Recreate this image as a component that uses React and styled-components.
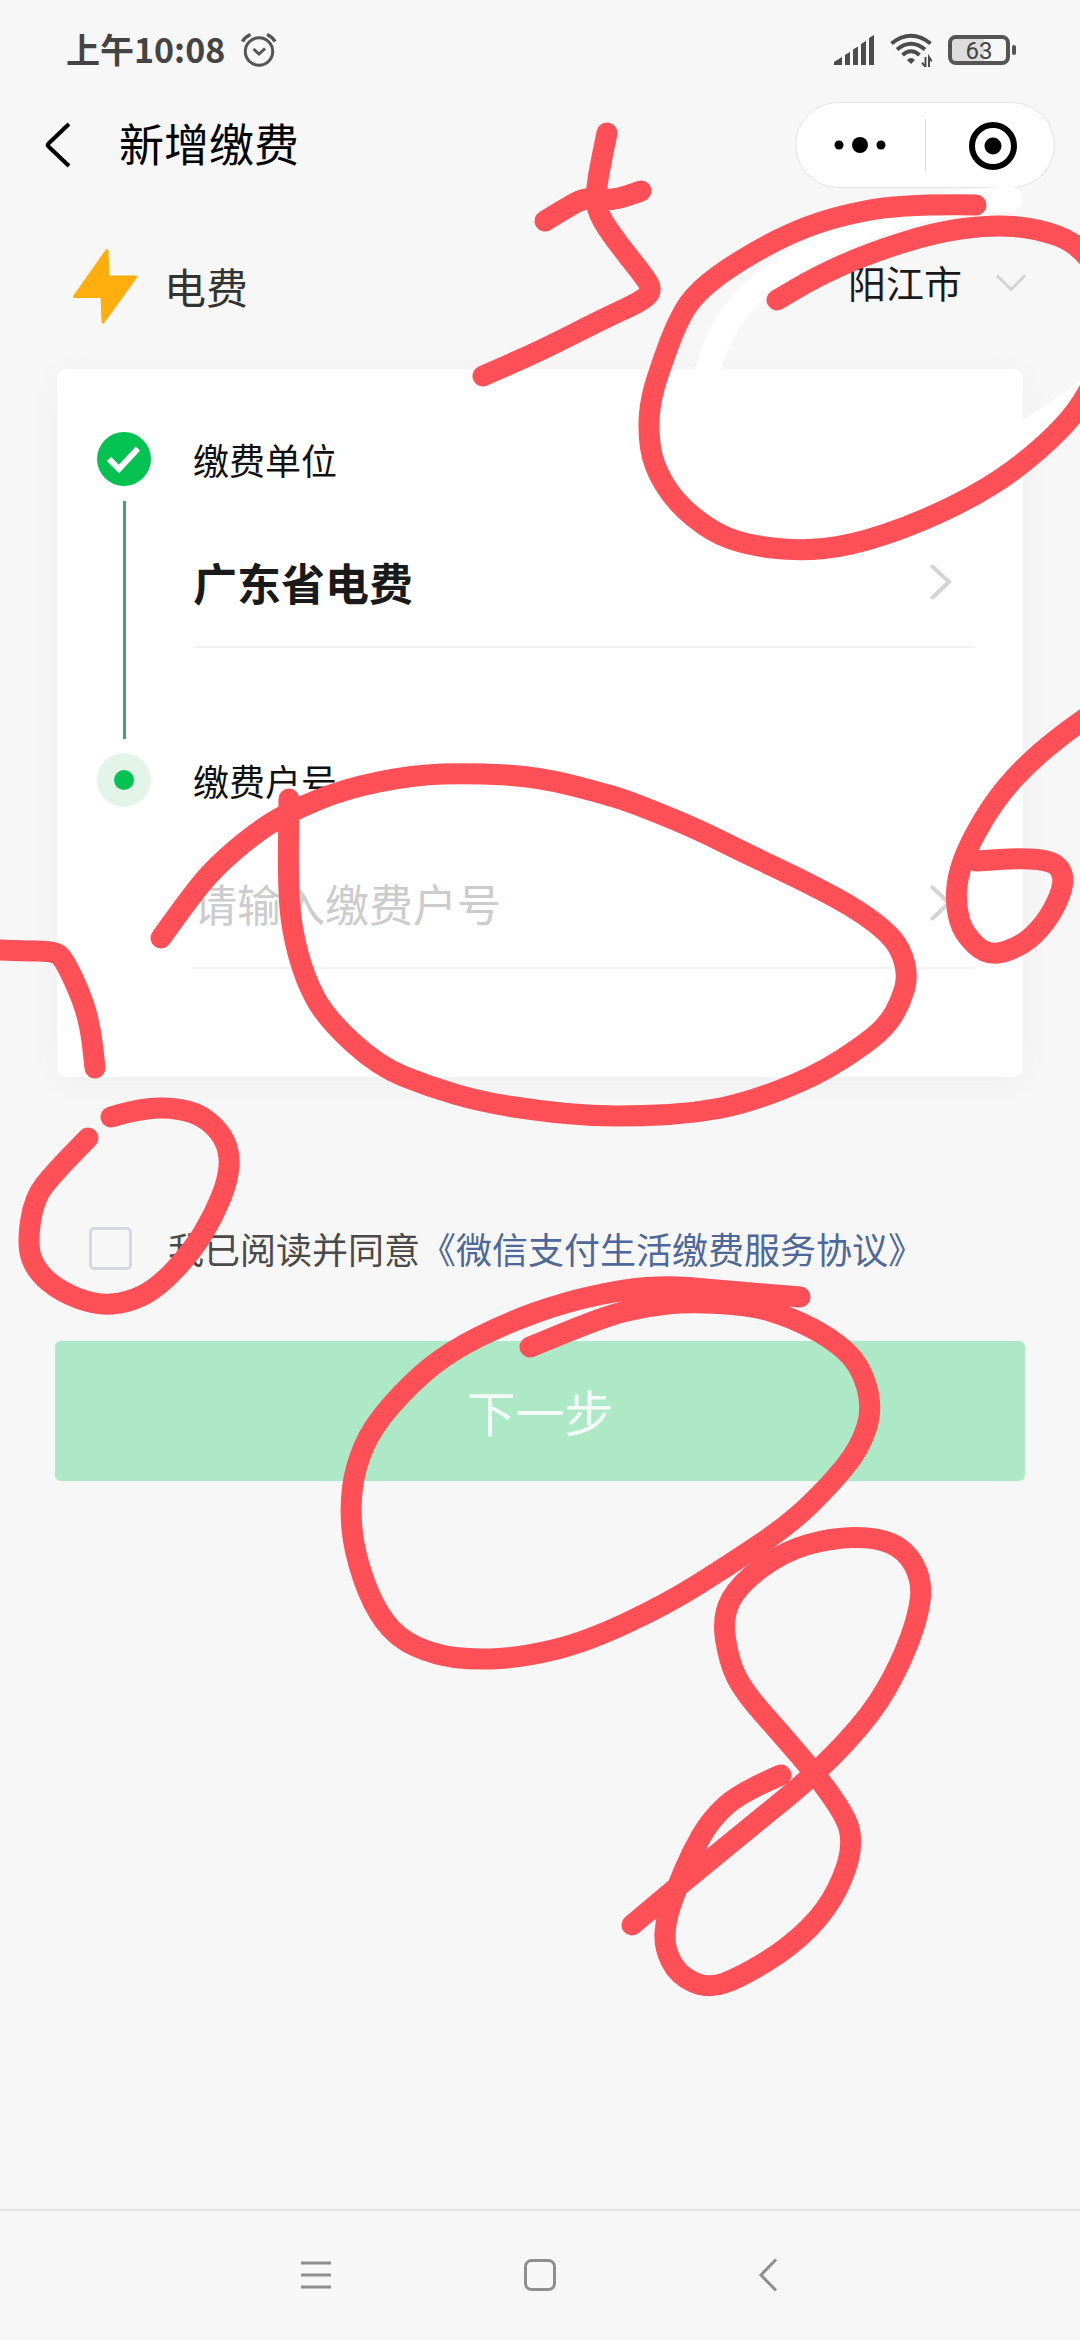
import React, { useState } from 'react';
import styled, { createGlobalStyle } from 'styled-components';

const GlobalStyle = createGlobalStyle`
  * {
    box-sizing: border-box;
  }

  body {
    margin: 0;
    background: #f7f7f7;
    font-family: 'Noto Sans CJK SC', 'Noto Sans', sans-serif;
  }

  button,
  input,
  select {
    margin: 0;
    padding: 0;
    border: none;
    border-radius: 0;
    background: none;
    color: inherit;
    font: inherit;
  }

  svg {
    display: block;
    flex: none;
  }
`;

const Page = styled.div`
  position: relative;
  display: flex;
  flex-direction: column;
  min-height: 100vh;
  overflow: hidden;
  background: #f7f7f7;
`;

const StatusBar = styled.div`
  display: flex;
  align-items: center;
  justify-content: space-between;
  height: 100px;
  padding: 0 64px 0 66px;
  color: #444;
`;

const StatusGroup = styled.div`
  display: flex;
  align-items: center;
  gap: 16px;
`;

const Clock = styled.span`
  padding-bottom: 2px;
  font-size: 34px;
  font-weight: 700;
  line-height: 48px;
`;

const Battery = styled.div`
  display: flex;
  align-items: center;
  gap: 2px;

  &::after {
    content: '';
    width: 4px;
    height: 10px;
    border-radius: 2px;
    background: #555;
  }
`;

const BatteryBody = styled.span`
  width: 62px;
  height: 30px;
  border: 4px solid #555;
  border-radius: 8px;
  background: linear-gradient(90deg, #dcdcdc 60%, transparent 60%);
  background-clip: padding-box;
  color: #444;
  font-family: Roboto, sans-serif;
  font-size: 24px;
  line-height: 24px;
  text-align: center;
`;

const Header = styled.header`
  display: flex;
  align-items: center;
  height: 90px;
  padding: 0 25px 0 44px;
`;

const IconButton = styled.button`
  display: flex;
  align-items: center;
  justify-content: center;
  width: ${({ $width }) => $width};
  height: 84px;
  cursor: pointer;
`;

const Title = styled.h1`
  flex: 1;
  margin: 0 0 0 47px;
  padding-bottom: 4px;
  color: #000;
  font-size: 45px;
  font-weight: 400;
  line-height: 64px;
`;

const Capsule = styled.div`
  display: flex;
  align-items: center;
  width: 260px;
  border: 1px solid #e4e4e4;
  border-radius: 43px;
  background: #fff;
`;

const CapsuleDivider = styled.span`
  width: 1px;
  height: 52px;
  background: #dcdcdc;
`;

const CategoryRow = styled.div`
  display: flex;
  align-items: center;
  justify-content: space-between;
  height: 179px;
  padding: 12px 53px 0 72px;
`;

const Category = styled.div`
  display: flex;
  align-items: center;
  gap: 26px;
  color: #333;
  font-size: 42px;
  line-height: 60px;
`;

const CityPicker = styled.label`
  display: flex;
  align-items: center;
  gap: 32px;
  padding-bottom: 8px;
`;

const CitySelect = styled.select`
  appearance: none;
  color: #1a1a1a;
  font-size: 38px;
  line-height: 56px;
`;

const Card = styled.section`
  margin: 0 57px;
  padding: 63px 48px 3px 40px;
  border-radius: 10px;
  background: #fff;
  box-shadow: 0 4px 32px rgba(0, 0, 0, 0.04);
`;

const Step = styled.div`
  display: flex;
  gap: 42px;
`;

const StepTrack = styled.div`
  display: flex;
  flex-direction: column;
  align-items: center;
  gap: 15px;
  width: 54px;
  padding-bottom: 14px;
`;

const StepLine = styled.span`
  flex: 1;
  width: 3px;
  background: #3aa76d;
`;

const StepBody = styled.div`
  flex: 1;
  padding-bottom: 105px;
`;

const StepLabel = styled.label`
  display: block;
  color: #111;
  font-size: 36px;
  line-height: 54px;
`;

const Field = styled.div`
  display: flex;
  align-items: center;
  height: 130px;
  margin-top: 32px;
  padding-right: 23px;
  border-bottom: 2px solid #f1f1f1;
`;

const ProviderButton = styled.button`
  flex: 1;
  color: #1a1a1a;
  font-size: 44px;
  font-weight: 700;
  line-height: 64px;
  text-align: left;
`;

const AccountInput = styled.input`
  flex: 1;
  min-width: 0;
  color: #1a1a1a;
  font-size: 44px;
  line-height: 64px;
  outline: none;

  &::placeholder {
    color: #ccc;
    opacity: 1;
  }
`;

const Agreement = styled.div`
  display: flex;
  align-items: center;
  gap: 36px;
  margin: 149px 57px 0 89px;
  color: #4a4a4a;
  font-size: 36px;
  line-height: 44px;
`;

const Checkbox = styled.input`
  appearance: none;
  flex: none;
  width: 43px;
  height: 43px;
  border: 3px solid #d5d9df;
  border-radius: 5px;

  &:checked {
    border-color: #07c160;
    background: #07c160;
  }
`;

const AgreementLink = styled.a`
  color: #4d6899;
  text-decoration: none;
`;

const NextButton = styled.button`
  height: 140px;
  margin: 71px 55px 0;
  border-radius: 6px;
  background: #aee9c7;
  color: #f4fcf7;
  font-size: 49px;
  line-height: 70px;
`;

const NavBar = styled.nav`
  display: flex;
  align-items: center;
  justify-content: center;
  gap: 166px;
  height: 131px;
  margin-top: auto;
  border-top: 2px solid #e2e2e2;
`;

const Ink = styled.svg`
  position: absolute;
  top: 0;
  left: 0;
  width: 100%;
  height: auto;
  pointer-events: none;
`;

const AlarmIcon = () => (
  <svg width="36" height="36" viewBox="0 0 36 36" fill="none" stroke="#555" strokeWidth="3">
    <circle cx="18" cy="19.5" r="13.7" />
    <path d="M12.5 17 18 22 24 16.500" />
    <path d="M1.500 9.500Q4 5 9.500 2.500M26 2.500Q31.500 5 34 9.500" strokeWidth="3.500" />
  </svg>
);

const SignalIcon = () => (
  <svg width="40" height="30" viewBox="0 0 40 30" fill="#4c4c4c">
    <path d="M0 30V27L8 22V30Z" />
    <path d="M11 30V20L16 17V30Z" />
    <path d="M19 30V14.500L24 11.500V30Z" />
    <path d="M27 30V9L32 6V30Z" />
    <path d="M35 30V3L40 0V30Z" />
  </svg>
);

const WifiIcon = () => (
  <svg width="42" height="34" viewBox="0 0 42 34" fill="none" stroke="#4c4c4c" strokeWidth="4">
    <path d="M1.500 10.500Q21-5 40.500 10.500" />
    <path d="M7 16.500Q21 5 35 16.500" />
    <path d="M12.500 22Q21 14.500 29.500 22" />
    <path d="M17 27Q21 23 25 27L21 31Z" fill="#4c4c4c" stroke="none" />
    <path d="M35.500 24V34L32 29.500M39 34V24L42 28.500" strokeWidth="2" />
  </svg>
);

const BackIcon = () => (
  <svg width="28" height="48" viewBox="0 0 28 48" fill="none" stroke="#000" strokeWidth="4">
    <path d="M25 3 4.500 22.500Q3 24 4.500 25.500L25 45" />
  </svg>
);

const MoreIcon = () => (
  <svg width="52" height="20" viewBox="0 0 52 20">
    <circle cx="5" cy="10" r="4.500" />
    <circle cx="26" cy="10" r="8" />
    <circle cx="47" cy="10" r="4.500" />
  </svg>
);

const CloseIcon = () => (
  <svg width="56" height="50" viewBox="0 0 56 50">
    <circle cx="31" cy="26" r="21" fill="none" stroke="#000" strokeWidth="6" />
    <circle cx="31" cy="26" r="8.500" />
  </svg>
);

const BoltIcon = () => (
  <svg width="66" height="76" viewBox="0 0 66 76" fill="#ffae0d" stroke="#ffae0d" strokeWidth="3" strokeLinejoin="round">
    <path d="M35 2.500 2.500 48.500H30L31 74 63.500 29H36Z" />
  </svg>
);

const ChevronDown = () => (
  <svg width="32" height="20" viewBox="0 0 32 20" fill="none" stroke="#d2d2d2" strokeWidth="3">
    <path d="M2 3.500 16 17.500 30 3.500" />
  </svg>
);

const ChevronRight = () => (
  <svg width="22" height="36" viewBox="0 0 22 36" fill="none" stroke="#d4d4d4" strokeWidth="4" strokeLinecap="round">
    <path d="M2.500 2.500 19 18 2.500 33.500" />
  </svg>
);

const DoneMarker = () => (
  <svg width="54" height="54" viewBox="0 0 54 54">
    <circle cx="27" cy="27" r="27" fill="#04c251" />
    <path d="M12 27 22 37 41 16.500" fill="none" stroke="#fff" strokeWidth="6" />
  </svg>
);

const CurrentMarker = () => (
  <svg width="54" height="54" viewBox="0 0 54 54">
    <circle cx="27" cy="27" r="27" fill="#e2f5e8" />
    <circle cx="27" cy="27" r="10" fill="#04c251" />
  </svg>
);

const MenuIcon = () => (
  <svg width="60" height="34" viewBox="0 0 60 34" stroke="#8f8f8f" strokeWidth="3">
    <path d="M17 4H47M17 16H47M17 28H47" />
  </svg>
);

const HomeIcon = () => (
  <svg width="60" height="34" viewBox="0 0 60 34" fill="none" stroke="#8f8f8f" strokeWidth="3">
    <rect x="15.500" y="1.500" width="29" height="29" rx="6" />
  </svg>
);

const NavBackIcon = () => (
  <svg width="60" height="34" viewBox="0 0 60 34" fill="none" stroke="#8f8f8f" strokeWidth="3">
    <path d="M40 .5 25 16 40 31.500" />
  </svg>
);

// pen strokes, as lists of points on a 1080 x 2340 canvas
const eraserStrokes = [
  [[1010, 199], [940, 203], [880, 222], [820, 246], [775, 273], [740, 304], [718, 338], [705, 378]],
  [[1110, 372], [1070, 405], [1022, 435]],
];

const penStrokes = [
  [[607, 133], [601, 162], [596, 190], [597, 213], [619, 245], [641, 272], [653, 290], [642, 301], [605, 318], [540, 351], [483, 376]],
  [[545, 221], [566, 208], [586, 197], [612, 201], [641, 191]],
  [[976, 205], [902, 204], [833, 217], [781, 237], [726, 269], [693, 296], [677, 323], [663, 360], [651, 397], [648, 430], [653, 465], [675, 502], [712, 532], [747, 545], [798, 551], [850, 546], [919, 523], [988, 489], [1039, 451], [1080, 409], [1104, 360], [1110, 290], [1080, 244], [1036, 228], [991, 225], [936, 232], [867, 254], [816, 277], [777, 300]],
  [[161, 938], [186, 903], [213, 869], [255, 833], [289, 812], [344, 789], [413, 775], [472, 773], [540, 777], [609, 795], [636, 804], [695, 828], [747, 854], [798, 878], [850, 905], [884, 929], [901, 949], [908, 977], [901, 1001], [889, 1023], [867, 1043], [816, 1076], [747, 1103], [695, 1113], [643, 1116], [592, 1116], [540, 1111], [482, 1102], [430, 1087], [378, 1066], [326, 1018], [305, 979], [292, 931], [288, 885], [289, 799]],
  [[1110, 702], [1080, 721], [1032, 759], [997, 797], [969, 844], [957, 878], [956, 907], [963, 933], [988, 957], [1022, 946], [1045, 924], [1061, 895], [1064, 874], [1053, 861], [1022, 858], [977, 861]],
  [[-20, 949], [20, 951], [54, 951], [64, 959], [83, 1000], [91, 1031], [95, 1068]],
  [[111, 1117], [131, 1111], [162, 1107], [197, 1112], [220, 1131], [230, 1153], [228, 1180], [214, 1215], [193, 1250], [158, 1288], [127, 1303], [96, 1305], [61, 1292], [36, 1271], [27, 1245], [34, 1198], [55, 1172], [88, 1138]],
  [[800, 1297], [708, 1289], [667, 1286], [626, 1289], [565, 1302], [504, 1324], [451, 1351], [413, 1381], [372, 1427], [355, 1468], [350, 1507], [354, 1551], [372, 1604], [397, 1638], [435, 1655], [475, 1660], [524, 1657], [586, 1642], [667, 1604], [729, 1565], [790, 1524], [831, 1484], [860, 1448], [873, 1408], [860, 1364], [831, 1338], [790, 1317], [749, 1305], [688, 1302], [647, 1306], [606, 1316], [530, 1347]],
  [[781, 1775], [741, 1792], [711, 1819], [691, 1854], [676, 1890], [666, 1919], [664, 1947], [678, 1975], [708, 1989], [741, 1977], [790, 1947], [827, 1910], [848, 1867], [852, 1836], [844, 1814], [818, 1777], [782, 1735], [744, 1692], [729, 1662], [722, 1616], [740, 1583], [785, 1551], [831, 1538], [876, 1537], [906, 1550], [922, 1580], [919, 1614], [901, 1663], [872, 1714], [818, 1772], [749, 1828], [688, 1878], [632, 1925]],
];

// quadratic curve through the middles of the segments
const toPath = (points) => {
  const last = points[points.length - 1];
  let d = `M${points[0].join(' ')}`;
  for (let i = 1; i < points.length - 1; i += 1) {
    const [x, y] = points[i];
    const [nextX, nextY] = points[i + 1];
    d += `Q${x} ${y} ${(x + nextX) / 2} ${(y + nextY) / 2}`;
  }
  return `${d}L${last.join(' ')}`;
};

const Strokes = () => (
  <Ink viewBox="0 0 1080 2340" fill="none" strokeLinecap="round" strokeLinejoin="round" aria-hidden="true">
    {eraserStrokes.map((points) => (
      <path key={points[0].join()} d={toPath(points)} stroke="#fff" strokeWidth="25" />
    ))}
    {penStrokes.map((points) => (
      <path key={points[0].join()} d={toPath(points)} stroke="#ff5058" strokeWidth="21" />
    ))}
  </Ink>
);

const App = () => {
  const [account, setAccount] = useState('');
  const [agreed, setAgreed] = useState(false);

  return (
    <Page>
      <GlobalStyle />
      <StatusBar>
        <StatusGroup>
          <Clock>上午10:08</Clock>
          <AlarmIcon />
        </StatusGroup>
        <StatusGroup>
          <SignalIcon />
          <WifiIcon />
          <Battery>
            <BatteryBody>63</BatteryBody>
          </Battery>
        </StatusGroup>
      </StatusBar>

      <Header>
        <IconButton $width="28px" aria-label="返回">
          <BackIcon />
        </IconButton>
        <Title>新增缴费</Title>
        <Capsule>
          <IconButton $width="50%" aria-label="更多">
            <MoreIcon />
          </IconButton>
          <CapsuleDivider />
          <IconButton $width="50%" aria-label="关闭">
            <CloseIcon />
          </IconButton>
        </Capsule>
      </Header>

      <CategoryRow>
        <Category>
          <BoltIcon />
          电费
        </Category>
        <CityPicker>
          <CitySelect aria-label="城市">
            <option>阳江市</option>
          </CitySelect>
          <ChevronDown />
        </CityPicker>
      </CategoryRow>

      <Card>
        <Step>
          <StepTrack>
            <DoneMarker />
            <StepLine />
          </StepTrack>
          <StepBody>
            <StepLabel htmlFor="provider">缴费单位</StepLabel>
            <Field>
              <ProviderButton id="provider">广东省电费</ProviderButton>
              <ChevronRight />
            </Field>
          </StepBody>
        </Step>
        <Step>
          <StepTrack>
            <CurrentMarker />
          </StepTrack>
          <StepBody>
            <StepLabel htmlFor="account">缴费户号</StepLabel>
            <Field>
              <AccountInput
                id="account"
                placeholder="请输入缴费户号"
                value={account}
                onChange={(e) => setAccount(e.target.value)}
              />
              <ChevronRight />
            </Field>
          </StepBody>
        </Step>
      </Card>

      <Agreement>
        <Checkbox id="agree" type="checkbox" checked={agreed} onChange={(e) => setAgreed(e.target.checked)} />
        <label htmlFor="agree">
          我已阅读并同意<AgreementLink href="#agreement">《微信支付生活缴费服务协议》</AgreementLink>
        </label>
      </Agreement>

      <NextButton disabled={!agreed || !account}>下一步</NextButton>

      <NavBar>
        <IconButton $width="60px" aria-label="菜单">
          <MenuIcon />
        </IconButton>
        <IconButton $width="60px" aria-label="主页">
          <HomeIcon />
        </IconButton>
        <IconButton $width="60px" aria-label="后退">
          <NavBackIcon />
        </IconButton>
      </NavBar>

      <Strokes />
    </Page>
  );
};

export default App;
